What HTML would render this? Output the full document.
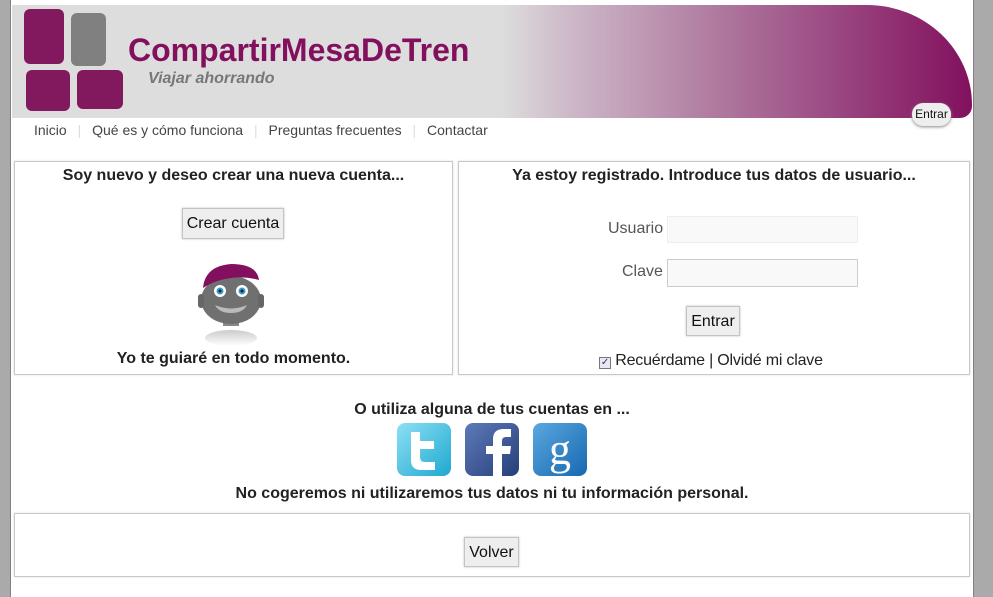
<!DOCTYPE html>
<html><head><meta charset="utf-8"><style>
*{margin:0;padding:0;box-sizing:border-box}
body{width:993px;height:597px;background:#fff;position:relative;overflow:hidden;font-family:"Liberation Sans",Arial,sans-serif;color:#222}
.a{position:absolute}
.box{position:absolute;border:1px solid #c8c8c8;box-shadow:0 0 2px #ddd}
.btn{position:absolute;background:#eee;border:1px solid #c4c4c4;box-shadow:0 0 2px #bbb;font-size:16px;color:#111;text-align:center}
.sq{position:absolute;background:#82185e;border-radius:6px}
.h{font-weight:bold;font-size:16px;text-align:center;position:absolute;color:#222}
.in{position:absolute;background:#f9f9f9;border:1px solid #ddd}
</style></head><body>
<div class="a" style="left:0;top:0;width:11px;height:597px;background:#aaa;border-right:1px solid #8a7a88"></div>
<div class="a" style="left:973px;top:0;width:20px;height:597px;background:#aaa;border-left:1px solid #8a7a88"></div>
<div class="a" style="left:12px;top:5px;width:960px;height:113px;background:linear-gradient(90deg,#ddd 0%,#ddd 51%,#cdb9c8 58%,#b07ba0 73%,#98437e 87%,#82105e 100%);border-top-right-radius:105px 100px;border-bottom-right-radius:12px"></div>
<div class="sq" style="left:24px;top:9px;width:40px;height:55px"></div>
<div class="sq" style="left:71px;top:13px;width:35px;height:53px;background:#808080"></div>
<div class="sq" style="left:26px;top:70px;width:44px;height:41px"></div>
<div class="sq" style="left:77px;top:70px;width:46px;height:39px"></div>
<div class="a" style="left:128px;top:32px;font-size:32px;font-weight:bold;color:#82105e">CompartirMesaDeTren</div>
<div class="a" style="left:148px;top:70px;font-size:16px;font-weight:bold;font-style:italic;color:#777">Viajar ahorrando</div>
<div class="a" style="left:912px;top:103px;width:39px;height:23px;border-radius:11px;background:#eee;box-shadow:0 1px 3px #888;font-size:12px;line-height:23px;text-align:center;color:#111">Entrar</div>
<div class="a" style="left:34px;top:122px;font-size:14px;color:#444;white-space:nowrap">Inicio <span style="color:#ddd;margin:0 7px">|</span> Qué es y cómo funciona <span style="color:#ddd;margin:0 7px">|</span> Preguntas frecuentes <span style="color:#ddd;margin:0 7px">|</span> Contactar</div>

<div class="box" style="left:14px;top:161px;width:439px;height:214px"></div>
<div class="h" style="left:14px;top:167px;width:439px">Soy nuevo y deseo crear una nueva cuenta...</div>
<div class="btn" style="left:182px;top:208px;width:102px;height:31px;line-height:30px">Crear cuenta</div>
<svg class="a" style="left:195px;top:260px" width="72" height="85" viewBox="0 0 72 85">
<defs><linearGradient id="r" x1="0" y1="0" x2="0" y2="1"><stop offset="0" stop-color="#ccc"/><stop offset="1" stop-color="#fff"/></linearGradient></defs>
<ellipse cx="36" cy="78" rx="26" ry="8" fill="url(#r)"/>
<rect x="28" y="58" width="16" height="8" fill="#888"/>
<ellipse cx="36" cy="40" rx="30" ry="24" fill="#707070"/>
<rect x="3" y="34" width="6" height="14" rx="3" fill="#666"/>
<rect x="63" y="34" width="6" height="14" rx="3" fill="#666"/>
<path d="M8 28 Q10 6 36 4 Q62 4 64 20 Q50 16 36 18 Q20 20 8 28Z" fill="#82105e"/>
<circle cx="25" cy="31" r="6" fill="#fff"/><circle cx="25" cy="31" r="3.5" fill="#3a9cc8"/><circle cx="25" cy="31" r="1.5" fill="#123"/>
<circle cx="47" cy="31" r="6" fill="#fff"/><circle cx="47" cy="31" r="3.5" fill="#3a9cc8"/><circle cx="47" cy="31" r="1.5" fill="#123"/>
<path d="M20 45 Q36 52 52 45 Q48 53 36 53 Q24 53 20 45Z" fill="#bbb"/>
</svg>
<div class="h" style="left:14px;top:350px;width:439px">Yo te guiaré en todo momento.</div>

<div class="box" style="left:458px;top:161px;width:512px;height:214px"></div>
<div class="h" style="left:458px;top:167px;width:512px">Ya estoy registrado. Introduce tus datos de usuario...</div>
<div class="a" style="left:608px;top:220px;font-size:16px;color:#555">Usuario</div>
<div class="in" style="left:667px;top:216px;width:191px;height:27px;border-color:#eee"></div>
<div class="a" style="left:622px;top:263px;font-size:16px;color:#555">Clave</div>
<div class="in" style="left:667px;top:259px;width:191px;height:28px;border-color:#ccc"></div>
<div class="btn" style="left:686px;top:306px;width:54px;height:30px;line-height:29px">Entrar</div>
<div class="a" style="left:599px;top:352px;font-size:16px;color:#222;white-space:nowrap;letter-spacing:-0.2px"><span style="display:inline-block;width:12px;height:12px;border:1px solid #777;background:#e8e8f4;font-size:10px;line-height:10px;text-align:center;color:#335;vertical-align:0">✓</span> Recuérdame | Olvidé mi clave</div>

<div class="h" style="left:14px;top:401px;width:956px">O utiliza alguna de tus cuentas en ...</div>
<svg class="a" style="left:397px;top:422px" width="192" height="54" viewBox="0 0 192 54">
<defs>
<linearGradient id="t" x1="0" y1="0" x2="1" y2="1"><stop offset="0" stop-color="#8de0f4"/><stop offset="1" stop-color="#1fa8d0"/></linearGradient>
<linearGradient id="f" x1="0" y1="0" x2="1" y2="1"><stop offset="0" stop-color="#5d7ab8"/><stop offset="1" stop-color="#263f7a"/></linearGradient>
<linearGradient id="g" x1="0" y1="0" x2="1" y2="1"><stop offset="0" stop-color="#5aa8e0"/><stop offset="1" stop-color="#1668b0"/></linearGradient>
</defs>
<rect x="0" y="1" width="54" height="53" rx="8" fill="url(#t)"/>
<path d="M14 10 h9 v9 h14 v8 h-14 v8 q0 5 5 5 h10 v8 h-14 q-10 0 -10-10Z" fill="#fff"/>
<rect x="68" y="1" width="54" height="53" rx="8" fill="url(#f)"/>
<path d="M96 54 v-22 h-7 v-8 h7 v-7 q0-10 11-10 h7 v8 h-5 q-4 0-4 4 v5 h9 l-1 8 h-8 v22Z" fill="#fff"/>
<rect x="136" y="1" width="54" height="53" rx="8" fill="url(#g)"/>
<text x="163" y="42" text-anchor="middle" font-family="Liberation Serif,serif" font-size="44" fill="#fff">g</text>
</svg>
<div class="h" style="left:14px;top:485px;width:956px">No cogeremos ni utilizaremos tus datos ni tu información personal.</div>

<div class="box" style="left:14px;top:513px;width:956px;height:64px"></div>
<div class="btn" style="left:464px;top:537px;width:55px;height:30px;line-height:29px">Volver</div>
</body></html>
